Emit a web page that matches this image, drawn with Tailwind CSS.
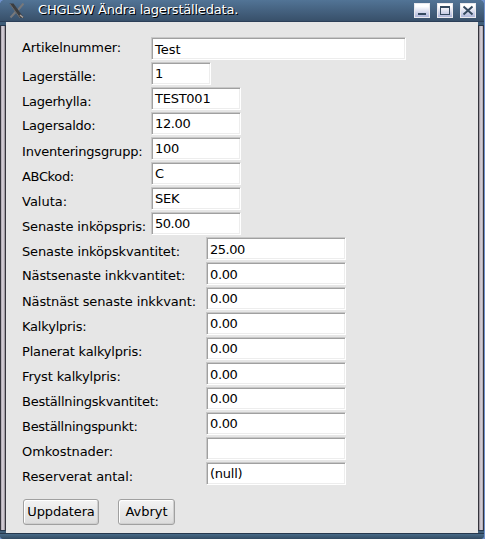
<!DOCTYPE html>
<html lang="sv">
<head>
<meta charset="utf-8">
<title>CHGLSW Ändra lagerställedata.</title>
<script src="https://cdn.jsdelivr.net/npm/@tailwindcss/browser@4"></script>
</head>
<body class="w-[485px] h-[539px] overflow-hidden bg-[#6f91cc] text-black text-[13px] leading-[15px]" style="font-family:'DejaVu Sans',sans-serif">
<div class="w-[484px] h-[539px] flex flex-col rounded-t-[5px] rounded-b-[4px] overflow-hidden bg-[#3f5d78]">
  <header class="h-[22px] shrink-0 flex items-start bg-linear-to-b from-[#527496] to-[#38506a] border-b border-[#2c3f58] pl-[9px]">
    <svg class="mt-[3px] shrink-0" width="16" height="16" viewBox="0 0 16 16"><path d="M14.500 .5L9 7M6.500 9L1.500 14.500" stroke="#77787b" stroke-width="2"/><path d="M.5 .5H4.500L15 15H11Z" fill="#3b3d40"/><path d="M1 1L11 15" stroke="#6f6c6b" stroke-width="1"/><path d="M11 12l3 2.500" stroke="#aaa29e" stroke-width="1.500"/></svg>
    <h1 class="ml-[13px] mt-[2px] flex-1 whitespace-nowrap text-white tracking-[-0.2px] [text-shadow:1px_1px_0_#000]">CHGLSW Ändra lagerställedata.</h1>
    <div class="flex gap-[7px] mt-[3px] mr-[8px]">
      <svg width="16" height="15" viewBox="0 0 16 15" shape-rendering="crispEdges"><defs><linearGradient id="g" x2="0" y2="1"><stop offset=".2" stop-color="#fff"/><stop offset="1" stop-color="#aab3d8"/></linearGradient></defs><rect x=".5" y=".5" width="15" height="14" fill="url(#g)" stroke="#e9e9ee"/><path d="M4 10h8v2H4z" fill="#34495f"/></svg>
      <svg width="16" height="15" viewBox="0 0 16 15" shape-rendering="crispEdges"><rect x=".5" y=".5" width="15" height="14" fill="url(#g)" stroke="#e9e9ee"/><path d="M3 3h10v9H3zM4 5v6h8V5z" fill-rule="evenodd" fill="#34495f"/></svg>
      <svg width="16" height="15" viewBox="0 0 16 15"><rect x=".5" y=".5" width="15" height="14" fill="url(#g)" stroke="#e9e9ee"/><path d="M3.500 3.500L12.500 11.500M12.500 3.500L3.500 11.500" stroke="#34495f" stroke-width="2"/></svg>
    </div>
  </header>
  <div class="flex h-[511px] shrink-0">
    <div class="w-[6px] shrink-0 flex flex-col">
      <div class="h-[4px] border-b border-[#26384d]"></div>
      <div class="flex-1 border-l border-r border-[#34343c] bg-linear-to-r from-[#aaa4ad] via-[#ded8e0] to-[#8d8890]"></div>
      <div class="h-[3px] border-t border-[#26384d]"></div>
    </div>
    <main class="w-[472px] bg-[#e6e6e6] pt-[15px] pl-4">
      <div id="rows"></div>
      <div class="flex gap-[19px] mt-[12px] pl-px">
        <button class="w-[76px] h-[26px] pb-px rounded-[3px] border border-[#a0a0a0] bg-linear-to-b from-[#f3f3f3] to-[#dcdcdc] tracking-[-0.15px] shadow-[inset_1px_1px_0_#fff,inset_-1px_-1px_0_#cfcfcf]">Uppdatera</button>
        <button class="w-[57px] h-[26px] pb-px rounded-[3px] border border-[#a0a0a0] bg-linear-to-b from-[#f3f3f3] to-[#dcdcdc] shadow-[inset_1px_1px_0_#fff,inset_-1px_-1px_0_#cfcfcf]">Avbryt</button>
      </div>
    </main>
    <div class="w-[6px] shrink-0 flex flex-col">
      <div class="h-[4px] border-b border-[#26384d]"></div>
      <div class="flex-1 border-l border-r border-[#34343c] bg-linear-to-r from-[#8d8890] via-[#ded8e0] to-[#aaa4ad]"></div>
      <div class="h-[3px] border-t border-[#26384d]"></div>
    </div>
  </div>
  <footer class="flex-1 border-t border-[#26384d] bg-linear-to-b from-[#486b88] to-[#324a62]"></footer>
</div>
<script>
// label, value, label column, field width, label offset, value offset, label spacing, value spacing
const A = 'w-[129px]', B = 'w-[184px]';
const M = 'w-[90px]', L = 'w-[140px]';
const P = 'pt-[7px]', V = 'pt-[2px]', W = 'pt-[3px]';
const rows = [
  ['Artikelnummer:', 'Test', A, 'w-[255px]', 'pt-[3px]', W, -.14, 0],
  ['Lagerställe:', '1', A, 'w-[60px]', P, V, -.2, 0],
  ['Lagerhylla:', 'TEST001', A, M, P, V, -.25, -.25],
  ['Lagersaldo:', '12.00', A, M, 'pt-[6px]', V, -.2, -.35],
  ['Inventeringsgrupp:', '100', A, M, P, V, -.2, -.25],
  ['ABCkod:', 'C', A, M, P, V, -.35, 0],
  ['Valuta:', 'SEK', A, M, P, V, 0, -.2],
  ['Senaste inköpspris:', '50.00', A, M, P, V, -.14, -.5],
  ['Senaste inköpskvantitet:', '25.00', B, L, P, W, -.13, -.5],
  ['Nästsenaste inkkvantitet:', '0.00', B, L, 'pt-[6px]', W, -.14, -.35],
  ['Nästnäst senaste inkkvant:', '0.00', B, L, P, V, -.12, -.35],
  ['Kalkylpris:', '0.00', B, L, P, V, -.2, -.35],
  ['Planerat kalkylpris:', '0.00', B, L, P, V, -.18, -.35],
  ['Fryst kalkylpris:', '0.00', B, L, P, W, -.15, -.35],
  ['Beställningskvantitet:', '0.00', B, L, P, V, -.23, -.35],
  ['Beställningspunkt:', '0.00', B, L, P, V, -.29, -.35],
  ['Omkostnader:', '', B, L, P, V, -.05, 0],
  ['Reserverat antal:', '(null)', B, L, P, V, -.06, -.25],
];
document.getElementById('rows').innerHTML = rows.map(([l, v, c, w, p, q, s, t]) =>
  `<div class="flex h-[25px] items-start"><div class="${c} ${p} shrink-0 whitespace-nowrap" style="letter-spacing:${s}px">${l}</div>` +
  `<div class="${w} ${q} h-[23px] shrink-0 bg-white pl-[3px] border border-t-[#c8c8c8] border-l-[#c8c8c8] border-r-white border-b-white shadow-[inset_1px_1px_0_#a0a0a0,inset_-1px_-1px_0_#ededed]"><div class="pt-px" style="letter-spacing:${t}px">${v}</div></div></div>`).join('');
</script>
</body>
</html>
